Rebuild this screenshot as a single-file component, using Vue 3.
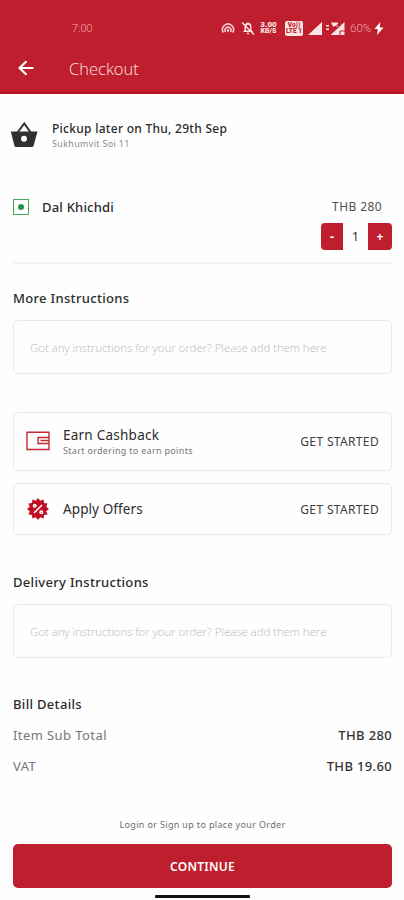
<template>
  <div class="screen">
    <header class="header">
      <div class="status-bar">
        <span class="time">7:00</span>
        <div class="status-icons">
          <svg class="hotspot" viewBox="0 0 14 14">
            <path d="M2.300 11.500A5.500 5.500 0 1 1 11.700 11.500M4.600 11A3 3 0 1 1 9.400 11" />
            <circle cx="7" cy="9.500" r="1.200" />
          </svg>
          <svg class="bell" viewBox="0 0 14 14">
            <path class="fill" d="M7 1.500c2.500.5 3.500 2.200 3.500 4.500v3l1.500 2H2l1.500-2V6C3.500 3.700 4.500 2 7 1.500z" />
            <path class="hole" d="M5 6.500c0-1.500.7-2.500 2-2.700 1.500.2 2.200 1.200 2.200 2.700v3H5z" />
            <path class="slash" d="M1 1.500l12 12" />
            <circle class="fill" cx="7" cy="12.500" r="1" />
          </svg>
          <div class="speed">
            <span>3.00</span>
            <span>KB/S</span>
          </div>
          <div class="volte">
            <span>Vo))</span>
            <span>LTE 1</span>
          </div>
          <svg class="signal" viewBox="0 0 14 13">
            <path d="M14 0v13H0z" />
          </svg>
          <svg class="signal-two" viewBox="0 0 19 13">
            <path d="M0 3h3v1.500H0zM0 6.500h3V8H0zM18.500 0v13H4.500z" />
            <path d="M5 .5h7v4H7z" />
            <path class="cut" d="M14 13V9h5M8 5.500l5-4" />
          </svg>
          <span class="battery">60%</span>
          <svg class="bolt" viewBox="0 0 10 14">
            <path d="M6.500 0L0 7.500h3.800L2.800 14 10 5.800H5.800z" />
          </svg>
        </div>
      </div>
      <div class="title-bar">
        <svg class="back" viewBox="0 0 16 16">
          <path d="M15.500 8H2M8.500 1.200L1.500 8l7 6.800" />
        </svg>
        <h1>Checkout</h1>
      </div>
    </header>

    <main class="content">
      <section class="pickup">
        <svg class="basket" viewBox="0 0 28 26">
          <path class="handle" d="M7.500 10.500L14.300 1.500l6.400 9" />
          <path d="M.8 9.500h26.700l-3.900 14.200q-.4 1.300-1.700 1.300H6.100q-1.300 0-1.700-1.300z" />
          <circle cx="14" cy="16.700" r="3" />
        </svg>
        <div class="pickup-text">
          <span class="pickup-time">Pickup later on Thu, 29th Sep</span>
          <span class="pickup-place">Sukhumvit Soi 11</span>
        </div>
      </section>

      <section class="item">
        <div class="veg-mark"><i></i></div>
        <span class="item-name">Dal Khichdi</span>
        <div class="item-right">
          <span class="item-price">THB {{ price }}</span>
          <div class="stepper">
            <button @click="decrease">-</button>
            <span>{{ quantity }}</span>
            <button @click="quantity++">+</button>
          </div>
        </div>
      </section>

      <h2 class="more-title">More Instructions</h2>
      <div class="note-box">
        <input v-model="orderNote" :placeholder="placeholder" />
      </div>

      <section class="offers">
        <div class="card cashback">
          <svg class="wallet" viewBox="0 0 24 20">
            <path d="M1 1.200h22v17.300H1zM23 6.500H12v6h11M14.500 9.500H23" />
          </svg>
          <div class="card-text">
            <span class="card-title earn">Earn Cashback</span>
            <span class="card-sub">Start ordering to earn points</span>
          </div>
          <span class="action">GET STARTED</span>
        </div>
        <div class="card apply">
          <svg class="percent" viewBox="0 0 22 22">
            <path :d="badgePath" />
            <path class="mark" d="M7 15l8-8" />
            <circle class="mark" cx="7.700" cy="7.800" r="1.300" />
            <circle class="mark" cx="14.300" cy="14.200" r="1.300" />
          </svg>
          <span class="card-title">Apply Offers</span>
          <span class="action">GET STARTED</span>
        </div>
      </section>

      <h2 class="delivery-title">Delivery Instructions</h2>
      <div class="note-box">
        <input v-model="deliveryNote" :placeholder="placeholder" />
      </div>

      <section class="bill">
        <h2 class="bill-title">Bill Details</h2>
        <div class="bill-row">
          <span>Item Sub Total</span>
          <span class="value">THB {{ price }}</span>
        </div>
        <div class="bill-row">
          <span>VAT</span>
          <span class="value">THB {{ vat }}</span>
        </div>
      </section>
    </main>

    <footer class="footer">
      <span class="login">Login or Sign up to place your Order</span>
      <button class="continue">CONTINUE</button>
      <div class="home-bar"></div>
    </footer>
  </div>
</template>

<script setup>
import { ref, computed } from 'vue';

const quantity = ref(1);
const orderNote = ref('');
const deliveryNote = ref('');
const placeholder = 'Got any instructions for your order? Please add them here';

const price = computed(() => quantity.value * 280);
const vat = computed(() => (price.value * 0.07).toFixed(2));

const decrease = () => {
  if (quantity.value > 1) quantity.value--;
};

// 12 pointed badge
const badgePath =
  Array.from({ length: 24 }, (_, i) => {
    const r = i % 2 ? 8.6 : 11;
    const a = (i * Math.PI) / 12;
    const x = (11 + r * Math.sin(a)).toFixed(2);
    const y = (11 - r * Math.cos(a)).toFixed(2);
    return `${i ? 'L' : 'M'}${x} ${y}`;
  }).join('') + 'z';
</script>

<style>
body {
  background-color: #fefefe;
}
</style>

<style scoped>
.screen {
  display: flex;
  flex-direction: column;
  height: 900px;
  overflow: hidden;
  background-color: #fefefe;
  color: #2b2b2b;
  font-family: 'Noto Sans', sans-serif;
}

svg {
  display: block;
  flex-shrink: 0;
}

button {
  padding: 0;
  border: none;
  background-color: #be1e2d;
  color: #fff;
  font-family: inherit;
}

span,
h1,
h2 {
  white-space: nowrap;
}

.header {
  box-sizing: border-box;
  height: 94px;
  padding-top: 18px;
  border-bottom: 2px solid #b90d19;
  background-color: #be1e2d;
  color: #fbe2e3;
}

.status-bar {
  display: flex;
  align-items: center;
  justify-content: space-between;
  height: 20px;
  padding: 0 20px 0 72px;
}

.time {
  font-family: Roboto, sans-serif;
  font-size: 11px;
  font-weight: 300;
  color: #eda9ad;
}

.status-icons {
  display: flex;
  align-items: center;
  fill: #fbe4e4;
}

.hotspot {
  width: 14px;
  height: 14px;
  margin-right: 6px;
}

.hotspot path {
  fill: none;
  stroke: #f5cccf;
  stroke-width: 1.6;
}

.bell {
  width: 14px;
  height: 14px;
  margin-right: 5px;
}

.hole {
  fill: #be1e2d;
}

.slash {
  stroke: #fbe4e4;
  stroke-width: 1.4;
}

.speed,
.volte {
  display: flex;
  flex-direction: column;
  align-items: center;
  width: 17px;
  font-family: Roboto, sans-serif;
  font-size: 8px;
  font-weight: 900;
  line-height: 6.5px;
}

.speed {
  margin-right: 8px;
}

.speed span:last-child {
  font-size: 7px;
}

.volte {
  width: 18px;
  padding: 1px 0;
  margin-right: 5px;
  border-radius: 2px;
  background-color: #fbe4e4;
  color: #be1e2d;
  font-size: 6.5px;
}

.signal {
  width: 14px;
  height: 13px;
  margin-right: 4px;
}

.signal-two {
  width: 19px;
  height: 13px;
  margin-right: 5px;
}

.cut {
  fill: none;
  stroke: #be1e2d;
  stroke-width: 1;
}

.battery {
  width: 24px;
  font-family: Roboto, sans-serif;
  font-size: 11.5px;
  font-weight: 300;
  color: #eda9ad;
}

.bolt {
  width: 10px;
  height: 13px;
  fill: #fff;
}

.title-bar {
  display: flex;
  align-items: center;
  height: 60px;
  padding-left: 18px;
}

.back {
  width: 16px;
  height: 16px;
  margin-right: 35px;
  fill: none;
  stroke: #fff;
  stroke-width: 2.2;
}

h1 {
  margin: 0;
  font-family: 'Open Sans', sans-serif;
  font-size: 16.5px;
  font-weight: 300;
}

.content {
  padding: 0 12px 0 13px;
}

.pickup {
  display: flex;
  height: 54px;
  margin-left: -3px;
  padding-top: 28px;
}

.basket {
  width: 28px;
  height: 26px;
  margin-right: 14px;
  fill: #303032;
}

.handle {
  fill: none;
  stroke: #303032;
  stroke-width: 2;
}

.basket circle {
  fill: #fefefe;
}

.pickup-text {
  display: flex;
  flex-direction: column;
}

.pickup-time {
  height: 16px;
  font-size: 12px;
  font-weight: 500;
  line-height: 13px;
  letter-spacing: 0.28px;
}

.pickup-place {
  font-size: 9px;
  line-height: 11px;
  letter-spacing: 0.32px;
  color: #8a8a8a;
}

.item {
  display: flex;
  box-sizing: border-box;
  height: 88px;
  padding-top: 21px;
  border-bottom: 2px solid #f4f4f4;
}

.veg-mark {
  display: flex;
  align-items: center;
  justify-content: center;
  box-sizing: border-box;
  width: 16px;
  height: 16px;
  margin: 2px 13px 0 0;
  border: 1px solid #45a85e;
}

.veg-mark i {
  width: 6px;
  height: 6px;
  border-radius: 50%;
  background-color: #219a42;
}

.item-name {
  font-size: 13px;
  font-weight: 500;
  line-height: 20px;
  letter-spacing: 0.2px;
}

.item-right {
  display: flex;
  flex-direction: column;
  align-items: flex-end;
  margin-left: auto;
}

.item-price {
  height: 26px;
  margin-right: 10px;
  font-size: 12px;
  line-height: 20px;
  letter-spacing: 0.4px;
  color: #505050;
}

.stepper {
  display: flex;
  width: 71px;
  height: 27px;
  overflow: hidden;
  border-radius: 4px;
}

.stepper button {
  width: 22px;
  font-size: 12px;
  font-weight: 700;
}

.stepper button:last-child {
  width: 24px;
}

.stepper span {
  flex: 1;
  text-align: center;
  font-size: 12px;
  line-height: 27px;
}

h2 {
  height: 20px;
  margin: 0;
  font-size: 13px;
  font-weight: 500;
  line-height: 20px;
  letter-spacing: 0.32px;
}

.more-title {
  margin: 24px 0 12px;
}

.note-box {
  display: flex;
  box-sizing: border-box;
  height: 54px;
  padding: 0 16px;
  border: 1px solid #e9e9e9;
  border-radius: 5px;
}

.note-box input {
  flex: 1;
  padding: 0;
  border: none;
  outline: none;
  background: none;
  font-family: 'Open Sans', sans-serif;
  font-size: 11.5px;
  font-weight: 300;
  letter-spacing: -0.07px;
}

.note-box input::placeholder {
  color: #b9b9b9;
}

.offers {
  display: flex;
  flex-direction: column;
  gap: 12px;
  margin-top: 38px;
}

.card {
  display: flex;
  align-items: center;
  box-sizing: border-box;
  padding: 0 12px;
  border: 1px solid #e9e9e9;
  border-radius: 5px;
}

.cashback {
  height: 59px;
}

.apply {
  height: 52px;
}

.wallet {
  width: 24px;
  height: 20px;
  margin-right: 13px;
  margin-bottom: 1px;
  fill: none;
  stroke: #c42736;
  stroke-width: 1.4;
}

.card-text {
  display: flex;
  flex-direction: column;
}

.card-title {
  font-size: 13.5px;
  line-height: 18px;
  letter-spacing: 0.1px;
}

.earn {
  letter-spacing: 0.24px;
}

.card-sub {
  font-size: 9px;
  line-height: 13px;
  letter-spacing: 0.31px;
  color: #777;
}

.action {
  margin-left: auto;
  font-size: 12px;
  letter-spacing: 0.35px;
  color: #3c3c3c;
}

.percent {
  width: 22px;
  height: 22px;
  margin-right: 14px;
  margin-left: 1px;
  fill: #be1022;
}

.mark {
  fill: none;
  stroke: #fff;
  stroke-width: 1.5;
}

.delivery-title {
  margin: 37px 0 12px;
}

.bill-title {
  margin: 36px 0 6px;
}

.bill-row {
  display: flex;
  justify-content: space-between;
  height: 31px;
  font-size: 13px;
  line-height: 31px;
  letter-spacing: 0.42px;
  color: #777;
}

.value {
  font-weight: 500;
  letter-spacing: 0.35px;
  color: #333;
}

.footer {
  display: flex;
  flex-direction: column;
  align-items: center;
  margin-top: auto;
  padding: 0 12px 2px 13px;
}

.login {
  height: 26px;
  font-size: 9px;
  line-height: 14px;
  letter-spacing: 0.34px;
  color: #6d6d6d;
}

.continue {
  width: 100%;
  height: 44px;
  border-radius: 5px;
  font-size: 12px;
  font-weight: 600;
  letter-spacing: 0.25px;
}

.home-bar {
  width: 95px;
  height: 3px;
  margin-top: 7px;
  border-radius: 1px;
  background-color: #101010;
}
</style>
